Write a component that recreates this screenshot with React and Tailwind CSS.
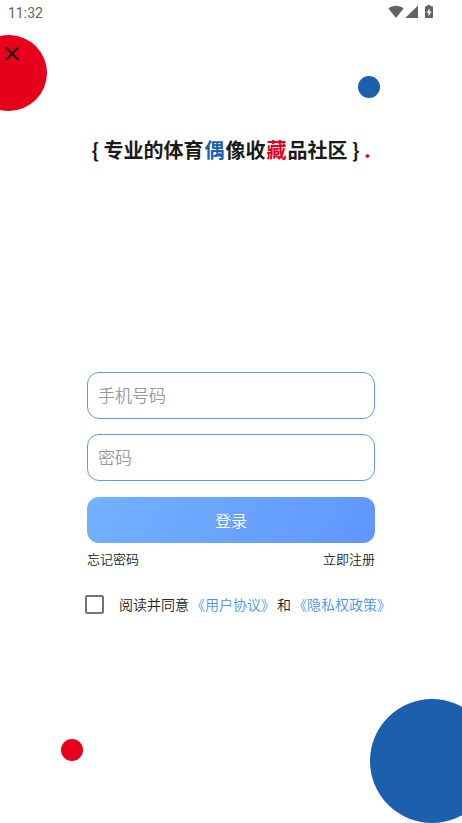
const cjk = "font-['Noto_Sans_CJK_SC',sans-serif]";

function StatusBar() {
  return (
    <div className="relative flex h-6 items-center justify-between pr-[25px] pl-2 font-[Roboto,sans-serif] text-[14px] leading-6 font-normal text-[#636363]">
      <span className="pt-[2px]">11:32</span>
      <div className="flex items-center">
        <svg className="h-4 w-4" viewBox="0 0 16 16" fill="currentColor" aria-hidden="true">
          <path d="M0.4 4.4C4.8 1 11.2 1 15.6 4.4L8 14z" />
        </svg>
        <svg className="h-4 w-4" viewBox="0 0 16 16" fill="currentColor" aria-hidden="true">
          <path d="M14 1.6V14H1.2z" />
        </svg>
        <svg className="ml-px h-4 w-4" viewBox="0 0 16 16" fill="currentColor" aria-hidden="true">
          <path
            fillRule="evenodd"
            d="M6.2 1h3.2v1.2H11c.6 0 1 .4 1 1V13c0 .6-.4 1-1 1H5c-.6 0-1-.4-1-1V3.200c0-.6.4-1 1-1h1.200zM8.600 4.200L5.600 8.800h1.900v3.600l3-4.800H8.600z"
          />
        </svg>
      </div>
    </div>
  );
}

function Backdrop() {
  return (
    <div className="pointer-events-none" aria-hidden="true">
      <div className="absolute top-[35px] -left-[29px] size-[76px] rounded-full bg-[#e6001c]" />
      <div className="absolute top-[76px] right-[82px] size-[22px] rounded-full bg-[#1c5fac]" />
      <div className="absolute bottom-[62px] left-[61px] size-[22px] rounded-full bg-[#e6001c]" />
      <div className="absolute -right-[32px] bottom-0 size-[124px] rounded-full bg-[#1c5fac]" />
    </div>
  );
}

const field =
  "h-[47px] w-full rounded-xl border border-[#5c9ce6] bg-white px-[10px] pb-[2px] text-[17px] text-[#333] outline-none placeholder:text-[#999]";

export default function App() {
  return (
    <main className={`relative flex min-h-screen flex-col overflow-hidden bg-white font-[350] ${cjk}`}>
      <Backdrop />
      <StatusBar />
      <button type="button" aria-label="关闭" className="relative mt-5 ml-1 size-4 text-black">
        <svg viewBox="0 0 16 16" fill="none" stroke="currentColor" strokeWidth="1.800" className="size-4">
          <path d="M1.800 3.400L14.400 15.800M14.400 3.400L1.800 15.800" />
        </svg>
      </button>

      <h1 className="relative mt-[74px] text-center text-[20px] leading-8 font-bold whitespace-nowrap text-[#1a1a1a]">
        {"{ "}专业的体育<span className="mx-px text-[#1c5fac]">偶</span>像收
        <span className="mx-px text-[#e6001c]">藏</span>品社区
        {" } "}
        <span className="text-[#e6001c]">.</span>
      </h1>

      <form className="relative mx-auto mt-[206px] flex w-full max-w-72 flex-col" onSubmit={(e) => e.preventDefault()}>
        <div className="flex flex-col gap-[15px]">
          <input type="tel" aria-label="手机号码" placeholder="手机号码" className={field} />
          <input type="password" aria-label="密码" placeholder="密码" className={field} />
        </div>
        <button
          type="submit"
          className="mt-4 h-[46px] w-full rounded-xl bg-linear-120 from-[#73b1ff] to-[#6096ff] text-[16px] text-white"
        >
          登录
        </button>
        <div className="mt-1 flex justify-between text-[13px] leading-6 text-[#222]">
          <a href="#forgot">忘记密码</a>
          <a href="#register">立即注册</a>
        </div>
        <div className="mt-[21px] -mr-6 -ml-[2px] flex items-center gap-[15px] text-[14px] leading-6 whitespace-nowrap text-[#222]">
          <input
            id="agree"
            type="checkbox"
            className="size-[19px] shrink-0 appearance-none rounded-[2px] border-2 border-[#737373] bg-white checked:bg-[#5c9ce6]"
          />
          <div className="flex gap-[2px]">
            <label htmlFor="agree">阅读并同意</label>
            <a href="#terms" className="text-[#4a94ec]">《用户协议》</a>
            <span>和</span>
            <a href="#privacy" className="text-[#4a94ec]">《隐私权政策》</a>
          </div>
        </div>
      </form>
    </main>
  );
}
